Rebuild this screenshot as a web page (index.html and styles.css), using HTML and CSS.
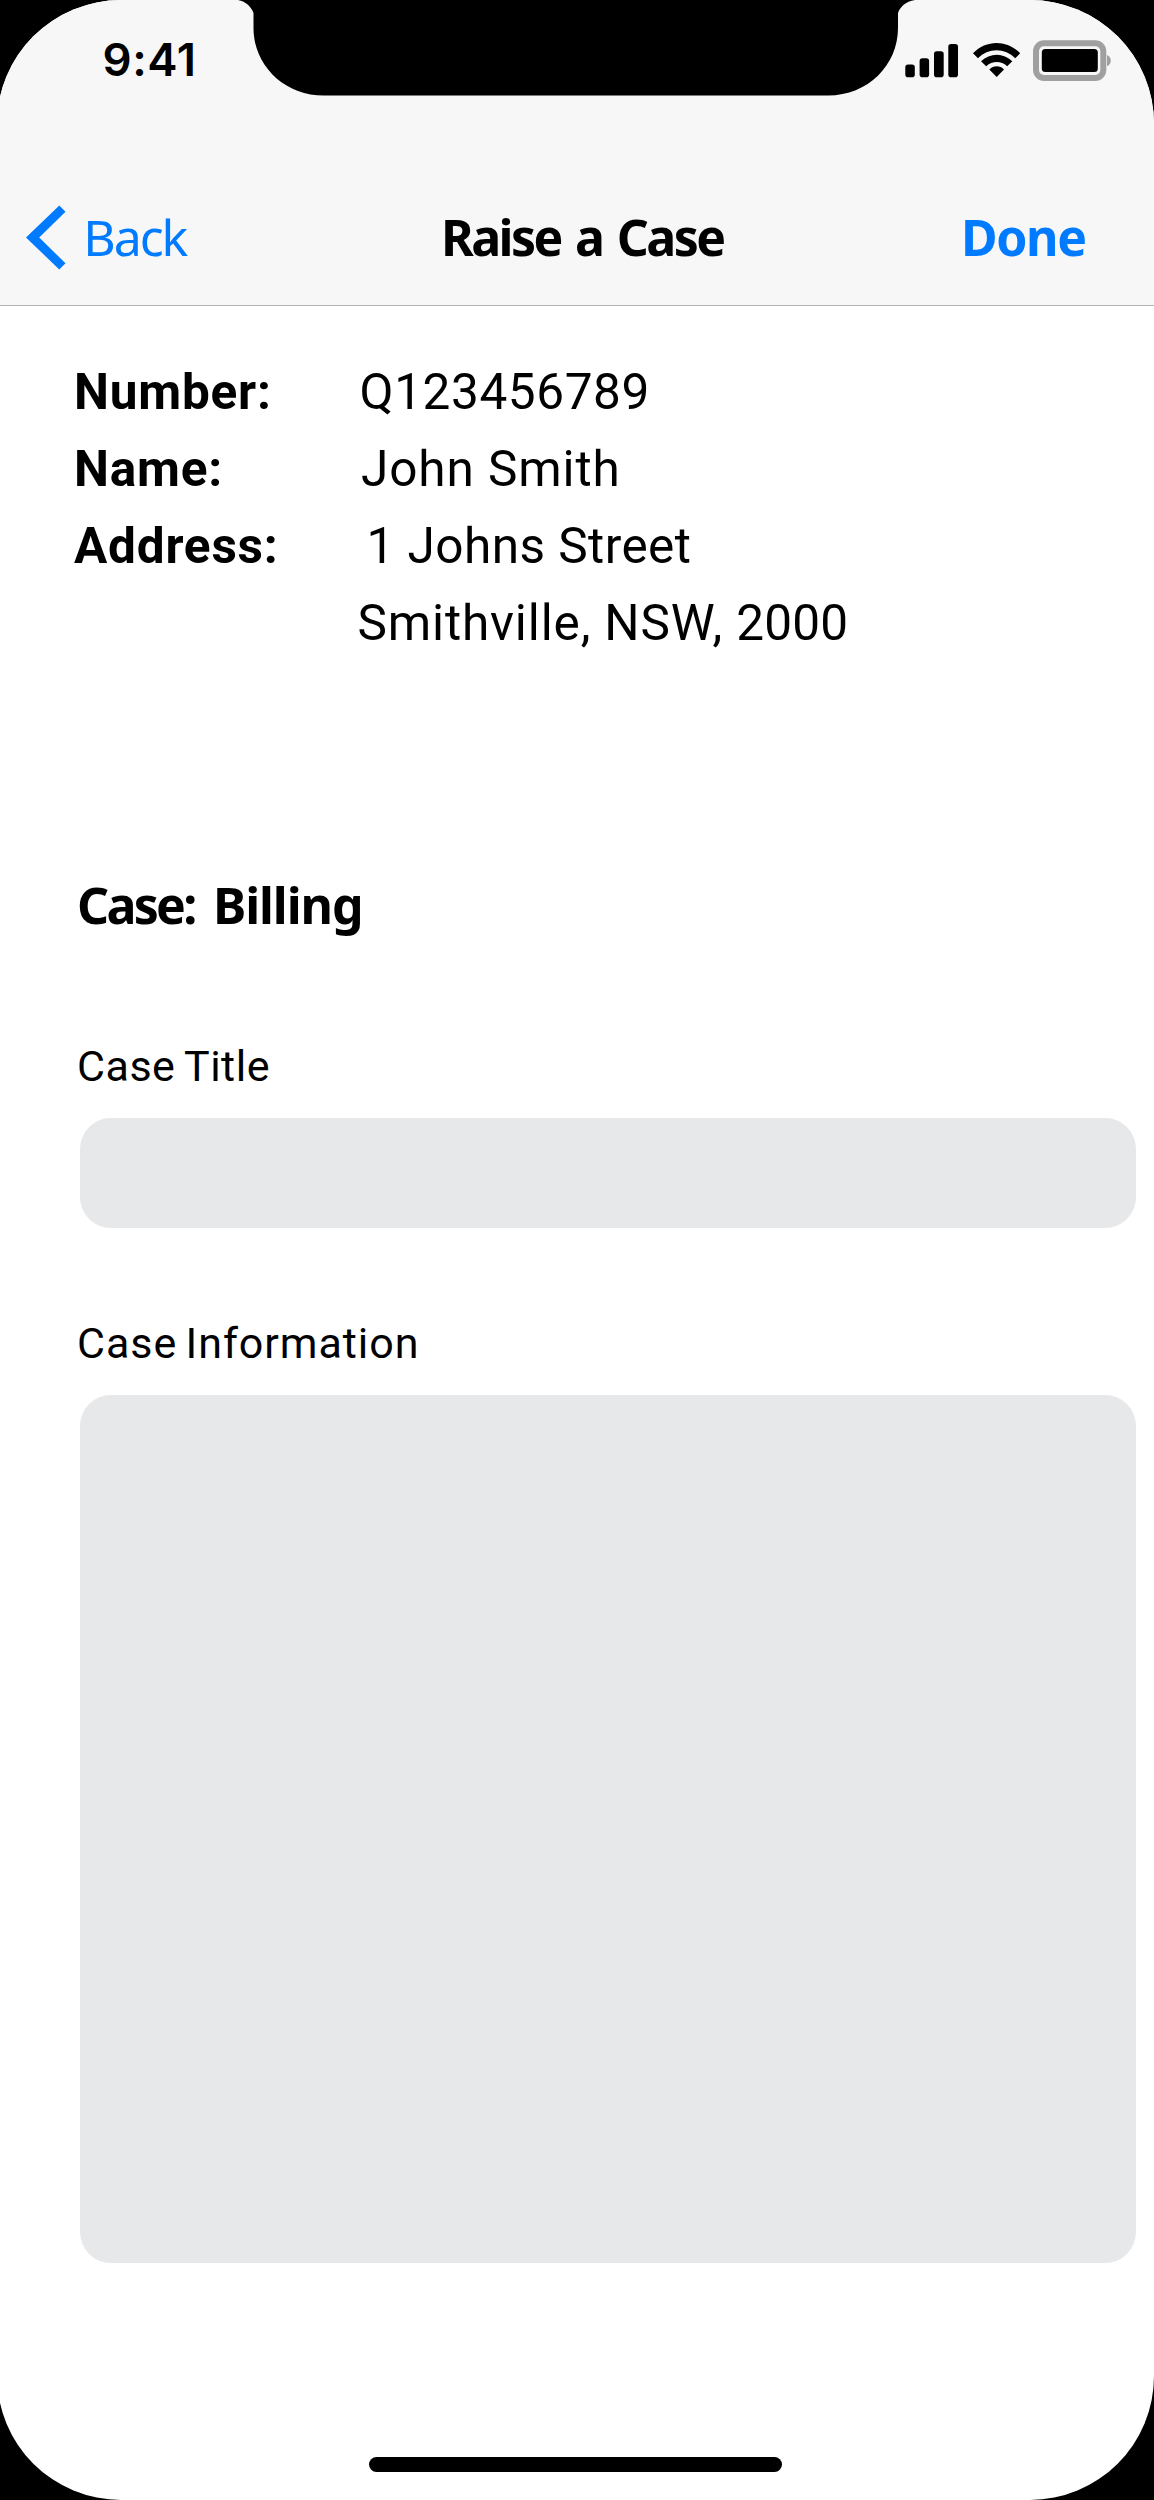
FILE: index.html
```html
<!DOCTYPE html>
<html lang="en">
<head>
<meta charset="utf-8">
<title>Raise a Case</title>
<link rel="stylesheet" href="styles.css">
</head>
<body>
<div class="screen">
  <header class="header">
    <div class="status">
      <span class="time">9:41</span>
      <svg class="notch" width="677" height="96" viewBox="0 0 677 96"><path d="M0 0C8 1.500 13.500 7 15.500 13V28C15.500 65 46 95.500 86 95.500H590C630 95.500 660 65 660 28V13C662 7 667.500 1.500 677 0Z"/></svg>
      <svg class="indicators" width="206" height="42" viewBox="905 40 206 42">
        <rect x="905.300" y="64.500" width="9.500" height="12.700" rx="2.800"/>
        <rect x="919.600" y="58.300" width="9.500" height="18.900" rx="2.800"/>
        <rect x="934" y="51.300" width="9.700" height="25.900" rx="2.800"/>
        <rect x="948.300" y="44" width="9.700" height="33.200" rx="2.800"/>
        <path d="M973 53.300C986 39.500 1007 39.500 1020.200 53.300L1015.300 58.200C1005 47.500 988 47.500 978 58.200Z"/>
        <path d="M981 61.300C990 52.500 1003.500 52.500 1012.300 61.300L1007.200 66.300C1001 60.700 992.500 60.700 986.200 66.300Z"/>
        <path d="M989.300 69.500C993.500 65.300 1000 65.300 1004 69.500L996.700 77Z"/>
        <rect x="1036" y="43.200" width="67.300" height="34.700" rx="8" fill="none" stroke="#a0a0a0" stroke-width="6"/>
        <path d="M1107 55C1109.500 56 1110.800 58 1110.800 60.500S1109.500 65.200 1107 66.200Z" fill="#a0a0a0"/>
        <rect x="1041.800" y="49" width="56" height="23" rx="3.500"/>
      </svg>
    </div>
    <nav class="nav">
      <a class="back"><svg width="40" height="66" viewBox="0 -1 40 66"><path d="M33.300 .5L39.500 6.700L13.200 32.500L39.500 58.300L33.300 64.500L0 32.500Z" fill="#007aff"/></svg><span>Back</span></a>
      <h1 class="title">Raise a Case</h1>
      <a class="done">Done</a>
    </nav>
  </header>
  <main class="content">
    <dl class="details">
      <dt>Number:</dt><dd class="number">Q123456789</dd>
      <dt>Name:</dt><dd class="name">John Smith</dd>
      <dt>Address:</dt><dd class="street">1 Johns Street</dd>
      <dd class="suburb">Smithville, NSW, <span class="postcode">2000</span></dd>
    </dl>
    <h2 class="case"><span class="case-label">Case:</span> <span class="case-type">Billing</span></h2>
    <label class="label" for="case-title">Case Title</label>
    <input class="field" id="case-title" type="text">
    <label class="label label-info" for="case-info">Case Information</label>
    <textarea class="field field-info" id="case-info"></textarea>
  </main>
  <div class="home"></div>
</div>
</body>
</html>
```
FILE: styles.css
```css
* { box-sizing: border-box; margin: 0; }
body { background: #000; color: #000; overflow: hidden; }
svg { display: block; flex: none; }
.screen {
  display: flex;
  flex-direction: column;
  width: 1157px;
  height: 2500px;
  margin-left: -3px;
  padding-left: 3px;
  border-radius: 124px;
  background: #fff;
  overflow: hidden;
}
.header {
  height: 306px;
  margin-left: -3px;
  padding-left: 3px;
  background: #f7f7f7;
  border-bottom: 1px solid #b2b2b2;
}
.status { display: flex; height: 96px; }
.time {
  width: 238px;
  padding: 23px 0 0 102.500px;
  font: 600 45.500px/73px Inter, sans-serif;
  letter-spacing: .6px;
}
.indicators { margin: 40px 0 0 -10px; }
.nav {
  display: grid;
  grid-template-columns: 441px 520px auto;
  align-items: center;
  height: 209px;
  padding-top: 72px;
  font: 50px/64px "Noto Sans", sans-serif;
  color: #007aff;
}
.back {
  display: flex;
  align-items: center;
  gap: 17px;
  padding-left: 26.300px;
  letter-spacing: -2.100px;
}
.title {
  font-size: 50px;
  font-weight: 700;
  letter-spacing: -2.600px;
  word-spacing: 4px;
  color: #000;
}
.done { font-weight: 700; letter-spacing: -1.400px; }
.content { padding: 48px 0 0 74px; }
.details {
  display: grid;
  grid-template-columns: 283.500px auto;
  grid-auto-rows: 77px;
  font: 49.500px/77px Roboto, sans-serif;
}
dt { font-weight: 700; letter-spacing: .8px; }
.number { padding-left: 2px; letter-spacing: .6px; }
.name { padding-left: 3.500px; letter-spacing: .9px; }
.street { padding-left: 9px; letter-spacing: .45px; }
.suburb { grid-column: 2; letter-spacing: .85px; }
.postcode { letter-spacing: .2px; }
.case {
  margin: 211px 0 0 3px;
  font: 700 50px/64px "Noto Sans", sans-serif;
}
.case-label { letter-spacing: -2.700px; }
.case-type { margin-left: 5.500px; letter-spacing: -1.100px; }
.label {
  display: block;
  margin: 104px 0 0 3px;
  font: 43px/50px Roboto, sans-serif;
  letter-spacing: .5px;
  word-spacing: -1.700px;
}
.label-info { margin-top: 90px; letter-spacing: .95px; word-spacing: -3.200px; }
.field {
  display: block;
  width: 1055.500px;
  height: 110.400px;
  margin: 26.600px 0 0 6.300px;
  padding: 24px;
  border: 0;
  border-radius: 31px;
  background: #e7e8ea;
  resize: none;
}
.field-info { height: 868px; margin-top: 27px; }
.home {
  width: 413px;
  height: 15.500px;
  margin: 194px 0 0 369px;
  border-radius: 8px;
  background: #000;
}
```
